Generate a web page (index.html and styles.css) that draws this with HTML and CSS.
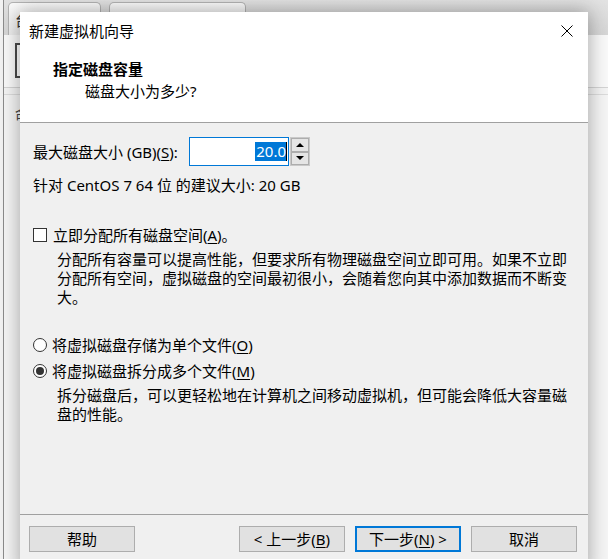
FILE: index.html
```html
<!DOCTYPE html>
<html lang="zh-CN">
<head>
<meta charset="utf-8">
<title>新建虚拟机向导</title>
<link rel="stylesheet" href="styles.css">
</head>
<body>
<div class="app">
  <div class="tabs">
    <div class="tab tab-home"><span class="tab-icon">台</span></div>
    <div class="tab tab-vm"><span class="tab-box"></span></div>
  </div>
  <div class="toolbar">
    <span class="tool-box"></span>
  </div>
  <div class="toolbar-line"></div>
  <div class="app-content"><span class="app-text">命</span></div>
</div>

<div class="dialog">
  <div class="titlebar">
    <span class="title">新建虚拟机向导</span>
    <span class="close">
      <svg width="12" height="12" viewBox="0 0 12 12"><path d="M0.5 0.5 L11.5 11.5 M11.5 0.5 L0.5 11.5" stroke="#000" stroke-width="1" fill="none"/></svg>
    </span>
  </div>
  <div class="header">
    <div class="head-title">指定磁盘容量</div>
    <div class="head-sub">磁盘大小为多少?</div>
  </div>
  <div class="content">
    <div class="size-row">
      <span class="size-label">最大磁盘大小 (GB)(<u>S</u>):</span>
      <span class="num-input"><span class="sel">20.0</span><span class="caret"></span></span>
      <span class="spinner">
        <span class="spin-btn"><span class="tri-up"></span></span>
        <span class="spin-btn"><span class="tri-down"></span></span>
      </span>
    </div>
    <div class="recommend">针对 CentOS 7 64 位 的建议大小: 20 GB</div>
    <div class="check-row"><span class="checkbox"></span>立即分配所有磁盘空间(<u>A</u>)。</div>
    <p class="desc">分配所有容量可以提高性能，但要求所有物理磁盘空间立即可用。如果不立即<br>分配所有空间，虚拟磁盘的空间最初很小，会随着您向其中添加数据而不断变<br>大。</p>
    <div class="radio-row radio-first"><span class="radio"></span>将虚拟磁盘存储为单个文件(<u>O</u>)</div>
    <div class="radio-row radio-second"><span class="radio checked"></span>将虚拟磁盘拆分成多个文件(<u>M</u>)</div>
    <p class="desc">拆分磁盘后，可以更轻松地在计算机之间移动虚拟机，但可能会降低大容量磁<br>盘的性能。</p>
  </div>
  <div class="footer">
    <button class="btn">帮助</button>
    <div class="btn-group">
      <button class="btn">&lt; 上一步(<u>B</u>)</button>
      <button class="btn btn-default">下一步(<u>N</u>) &gt;</button>
      <button class="btn">取消</button>
    </div>
  </div>
</div>
</body>
</html>
```

FILE: styles.css
```css
* { box-sizing: border-box; }

html, body {
  margin: 0;
  padding: 0;
}

body {
  width: 608px;
  height: 559px;
  overflow: hidden;
  position: relative;
  background: #f2f2f2;
  font-family: "Noto Sans", "Noto Sans CJK SC", sans-serif;
  font-size: 15px;
  color: #000;
}

/* background application window */
.app {
  margin-left: 3px;
  height: 559px;
  border-left: 1px solid #8c8c8c;
  background: #f7f7f7;
  display: flex;
  flex-direction: column;
}

.tabs {
  height: 35px;
  background: linear-gradient(#e2e2e2, #d6d6d6);
  display: flex;
  align-items: flex-end;
  gap: 8px;
  padding-left: 4px;
}

.tab {
  height: 33px;
  border: 1px solid #b3b3b3;
  border-bottom: none;
  border-radius: 5px 5px 0 0;
  background: linear-gradient(#fbfbfb, #ececec);
  display: flex;
  align-items: center;
  padding-left: 6px;
  font-size: 15px;
  color: #333;
}

.tab-home { width: 93px; }
.tab-vm { width: 137px; }

.tab-box {
  width: 14px;
  height: 14px;
  border: 2px solid #555;
}

.toolbar {
  height: 53px;
  background: #f9f9f9;
  border-bottom: 1px solid #d4d4d4;
  padding: 8px 0 0 11px;
}

.tool-box {
  display: block;
  width: 30px;
  height: 35px;
  border: 2px solid #4a4a4a;
  background: #fff;
}

.toolbar-line {
  height: 7px;
  border-bottom: 1px solid #dcdcdc;
  background: #f4f4f4;
}

.app-content {
  flex: 1;
  background: #f5f5f5;
  padding: 8px 0 0 11px;
  color: #444;
}

/* dialog */
.dialog {
  position: absolute;
  left: 20px;
  top: 12px;
  width: 568px;
  height: 560px;
  background: #f0f0f0;
  box-shadow: 0 0 18px 1px rgba(0, 0, 0, 0.32);
  display: flex;
  flex-direction: column;
}

.titlebar {
  height: 38px;
  background: #fff;
  display: flex;
  align-items: center;
  justify-content: space-between;
  padding-left: 9px;
}

.title {
  line-height: 20px;
}

.close {
  width: 42px;
  height: 38px;
  display: flex;
  align-items: center;
  justify-content: center;
}

.header {
  height: 73px;
  background: #fff;
  border-bottom: 1px solid #a0a0a0;
  padding: 9px 0 0 33px;
}

.head-title {
  font-weight: bold;
  line-height: 20px;
}

.head-sub {
  line-height: 20px;
  margin: 2px 0 0 32px;
}

.content {
  height: 391px;
  padding: 14px 0 0 13px;
  display: flex;
  flex-direction: column;
}

.size-row {
  display: flex;
  align-items: center;
  height: 29px;
}

.size-label {
  width: 156px;
  line-height: 20px;
}

.size-label u, .check-row u, .radio-row u, .btn u { text-decoration-thickness: 1px; text-underline-offset: 2px; }

.num-input {
  width: 100px;
  height: 29px;
  background: #fff;
  border: 1px solid #0078d7;
  display: flex;
  align-items: center;
  justify-content: flex-end;
  padding-right: 1px;
}

.sel {
  background: #0078d7;
  color: #fff;
  line-height: 19px;
  padding: 0 0 0 1px;
}

.caret {
  width: 1px;
  height: 19px;
  background: #000;
}

.spinner {
  margin-left: 1px;
  width: 20px;
  height: 29px;
  display: flex;
  flex-direction: column;
  border: 1px solid #c9c9c9;
}

.spin-btn {
  flex: 1;
  background: #e5e5e5;
  border: 1px solid #adadad;
  display: flex;
  align-items: center;
  justify-content: center;
}

.tri-up {
  width: 0;
  height: 0;
  border-left: 4px solid transparent;
  border-right: 4px solid transparent;
  border-bottom: 4px solid #000;
}

.tri-down {
  width: 0;
  height: 0;
  border-left: 4px solid transparent;
  border-right: 4px solid transparent;
  border-top: 4px solid #000;
}

.recommend {
  margin-top: 9px;
  line-height: 20px;
}

.check-row {
  margin-top: 30px;
  line-height: 20px;
  display: flex;
  align-items: center;
}

.checkbox {
  width: 14px;
  height: 14px;
  border: 1px solid #333;
  background: #fff;
  margin-right: 6px;
}

.desc {
  margin: 5px 0 0 24px;
  line-height: 19px;
  white-space: nowrap;
}

.radio-row {
  line-height: 20px;
  display: flex;
  align-items: center;
}

.radio-first { margin-top: 28px; }
.radio-second { margin-top: 6px; }

.radio {
  width: 14px;
  height: 14px;
  border: 1px solid #333;
  border-radius: 50%;
  background: #fff;
  margin-right: 5px;
  display: flex;
  align-items: center;
  justify-content: center;
}

.radio.checked::after {
  content: "";
  width: 8px;
  height: 8px;
  border-radius: 50%;
  background: #333;
}

.footer {
  border-top: 1px solid #a0a0a0;
  padding: 11px 11px 0 9px;
  display: flex;
  justify-content: space-between;
  align-items: flex-start;
}

.btn-group {
  display: flex;
  gap: 10px;
}

.btn {
  width: 106px;
  height: 26px;
  margin: 0;
  padding: 0;
  background: #e1e1e1;
  border: 1px solid #adadad;
  font-family: "Noto Sans", "Noto Sans CJK SC", sans-serif;
  font-size: 15px;
  line-height: 20px;
  color: #000;
}

.btn-default {
  border: 2px solid #0078d7;
}
```
